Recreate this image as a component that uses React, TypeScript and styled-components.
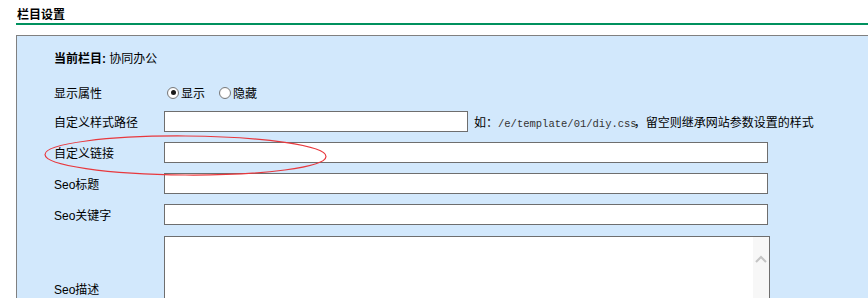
import React, { useState } from 'react';
import styled, { createGlobalStyle } from 'styled-components';

const GlobalStyle = createGlobalStyle`
  html, body {
    margin: 0;
    padding: 0;
    background: #ffffff;
    overflow: hidden;
  }
  body {
    font-family: "Liberation Sans", "Noto Sans CJK SC", sans-serif;
    font-size: 12px;
    color: #000;
  }
`;

const Page = styled.div`
  position: relative;
  height: 100vh;
  overflow: hidden;
  padding-left: 16px;
`;

const Title = styled.div`
  height: 15px;
  padding-top: 8px;
  line-height: 14px;
  font-weight: bold;
  padding-left: 1px;
  border-bottom: 2px solid #00915e;
`;

const Panel = styled.div`
  margin-top: 10px;
  border-top: 1px solid #808080;
  border-left: 1px solid #808080;
  background-color: #d2e8fc;
  padding-left: 37px;
`;

const Row = styled.div<{ $h: number }>`
  display: grid;
  grid-template-columns: 110px 1fr;
  align-items: center;
  height: ${(p) => p.$h}px;
`;

const Label = styled.div`
  white-space: nowrap;
`;

const Strong = styled.span`
  font-weight: bold;
`;

const Field = styled.div`
  display: flex;
  align-items: center;
`;

const TextInput = styled.input<{ $w: number }>`
  box-sizing: border-box;
  width: ${(p) => p.$w}px;
  height: 21px;
  margin: 0;
  padding: 0 3px;
  border: 1px solid #6e6e6e;
  background: #ffffff;
  font: inherit;
  outline: none;
`;

const Hint = styled.span`
  margin-left: 6px;
  white-space: nowrap;
`;

const Code = styled.span`
  font-family: "Liberation Mono", monospace;
  font-size: 10.5px;
  color: #333;
  margin-right: -3px;
`;

const RadioLabel = styled.label`
  display: inline-flex;
  align-items: center;
  margin-right: 11px;
  cursor: pointer;
`;

const Radio = styled.input`
  appearance: none;
  box-sizing: border-box;
  width: 12px;
  height: 12px;
  margin: 0 2px 0 3px;
  border: 1px solid #7a7a7a;
  border-radius: 50%;
  background: radial-gradient(circle, #ffffff 50%, #e8e8e8 100%);
  position: relative;

  &:checked::after {
    content: '';
    position: absolute;
    left: 2.5px;
    top: 2.5px;
    width: 5px;
    height: 5px;
    border-radius: 50%;
    background: #1a1a1a;
  }
`;

const AreaBox = styled.div`
  box-sizing: border-box;
  width: 606px;
  height: 104px;
  border: 1px solid #6e6e6e;
  background: #ffffff;
  display: flex;
`;

const TextArea = styled.textarea`
  flex: 1;
  border: none;
  resize: none;
  outline: none;
  font: inherit;
  padding: 2px;
  margin: 0;
  background: transparent;
`;

const ScrollTrack = styled.div`
  width: 16px;
  background: #f7f7f7;
  display: flex;
  justify-content: center;
  padding-top: 18px;
`;

const Annotation = styled.svg`
  position: absolute;
  left: 43px;
  top: 134px;
  pointer-events: none;
`;

const App = () => {
  const [show, setShow] = useState('1');

  return (
    <Page>
      <GlobalStyle />
      <Title>栏目设置</Title>
      <Panel>
        <Row $h={43}>
          <Label>
            <Strong>当前栏目: </Strong>协同办公
          </Label>
        </Row>
        <Row $h={27}>
          <Label>显示属性</Label>
          <Field>
            <RadioLabel>
              <Radio type="radio" name="show" checked={show === '1'} onChange={() => setShow('1')} />
              显示
            </RadioLabel>
            <RadioLabel>
              <Radio type="radio" name="show" checked={show === '0'} onChange={() => setShow('0')} />
              隐藏
            </RadioLabel>
          </Field>
        </Row>
        <Row $h={31}>
          <Label>自定义样式路径</Label>
          <Field>
            <TextInput $w={304} type="text" />
            <Hint>
              如：<Code>/e/template/01/diy.css</Code>，留空则继承网站参数设置的样式
            </Hint>
          </Field>
        </Row>
        <Row $h={31}>
          <Label>自定义链接</Label>
          <Field>
            <TextInput $w={604} type="text" />
          </Field>
        </Row>
        <Row $h={31}>
          <Label>Seo标题</Label>
          <Field>
            <TextInput $w={604} type="text" />
          </Field>
        </Row>
        <Row $h={31}>
          <Label>Seo关键字</Label>
          <Field>
            <TextInput $w={604} type="text" />
          </Field>
        </Row>
        <Row $h={116}>
          <Label>Seo描述</Label>
          <Field>
            <AreaBox>
              <TextArea />
              <ScrollTrack>
                <svg width="12" height="8" viewBox="0 0 12 8">
                  <path d="M1 7 L6 2 L11 7" fill="none" stroke="#c4c4c4" strokeWidth="2" />
                </svg>
              </ScrollTrack>
            </AreaBox>
          </Field>
        </Row>
      </Panel>
      <Annotation width="286" height="44" viewBox="0 0 286 44">
        <ellipse
          cx="142.5"
          cy="21.5"
          rx="140.5"
          ry="19.5"
          fill="none"
          stroke="#e8383d"
          strokeWidth="1.2"
          transform="rotate(0.4 142.5 21.5)"
        />
      </Annotation>
    </Page>
  );
};

export default App;
